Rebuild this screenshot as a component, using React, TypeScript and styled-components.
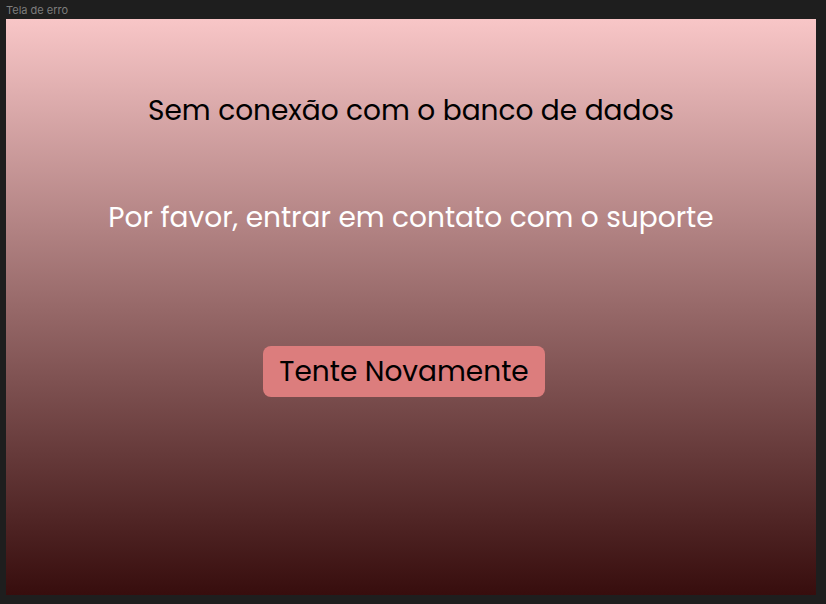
import React from "react";
import styled, { createGlobalStyle } from "styled-components";

const Global = createGlobalStyle`
  html, body {
    margin: 0;
    padding: 0;
    background: #1e1e1e;
  }
  body {
    width: 826px;
    height: 604px;
    overflow: hidden;
  }
`;

const Canvas = styled.div`
  display: flex;
  flex-direction: column;
  width: 826px;
  height: 604px;
  background: #1e1e1e;
`;

const FrameLabel = styled.div`
  height: 19px;
  padding-left: 6px;
  font-family: Inter, "Liberation Sans", sans-serif;
  font-size: 11px;
  line-height: 21px;
  color: #7d7d7d;
  box-sizing: border-box;
`;

const Frame = styled.main`
  margin-left: 6px;
  width: 810px;
  height: 576px;
  display: flex;
  flex-direction: column;
  align-items: center;
  background: linear-gradient(180deg, #f8c6c7 0%, #976969 50%, #370d0d 100%);
  font-family: Poppins, "Open Sans", sans-serif;
`;

const Message = styled.p<{ $light?: boolean; $top: number }>`
  margin: ${(p) => p.$top}px 0 0;
  font-size: 28px;
  line-height: 36px;
  font-weight: 400;
  color: ${(p) => (p.$light ? "#ffffff" : "#000000")};
  text-align: center;
`;

const RetryButton = styled.button`
  margin: 110px 14px 0 0;
  width: 282px;
  height: 51px;
  border: none;
  border-radius: 8px;
  background: #dc7d7d;
  color: #000;
  font-family: Poppins, "Open Sans", sans-serif;
  font-size: 28px;
  padding: 0;
  cursor: pointer;
`;

export default function App() {
  return (
    <Canvas>
      <Global />
      <FrameLabel>Tela de erro</FrameLabel>
      <Frame>
        <Message $top={74}>Sem conexão com o banco de dados</Message>
        <Message $top={71} $light>
          Por favor, entrar em contato com o suporte
        </Message>
        <RetryButton>Tente Novamente</RetryButton>
      </Frame>
    </Canvas>
  );
}
